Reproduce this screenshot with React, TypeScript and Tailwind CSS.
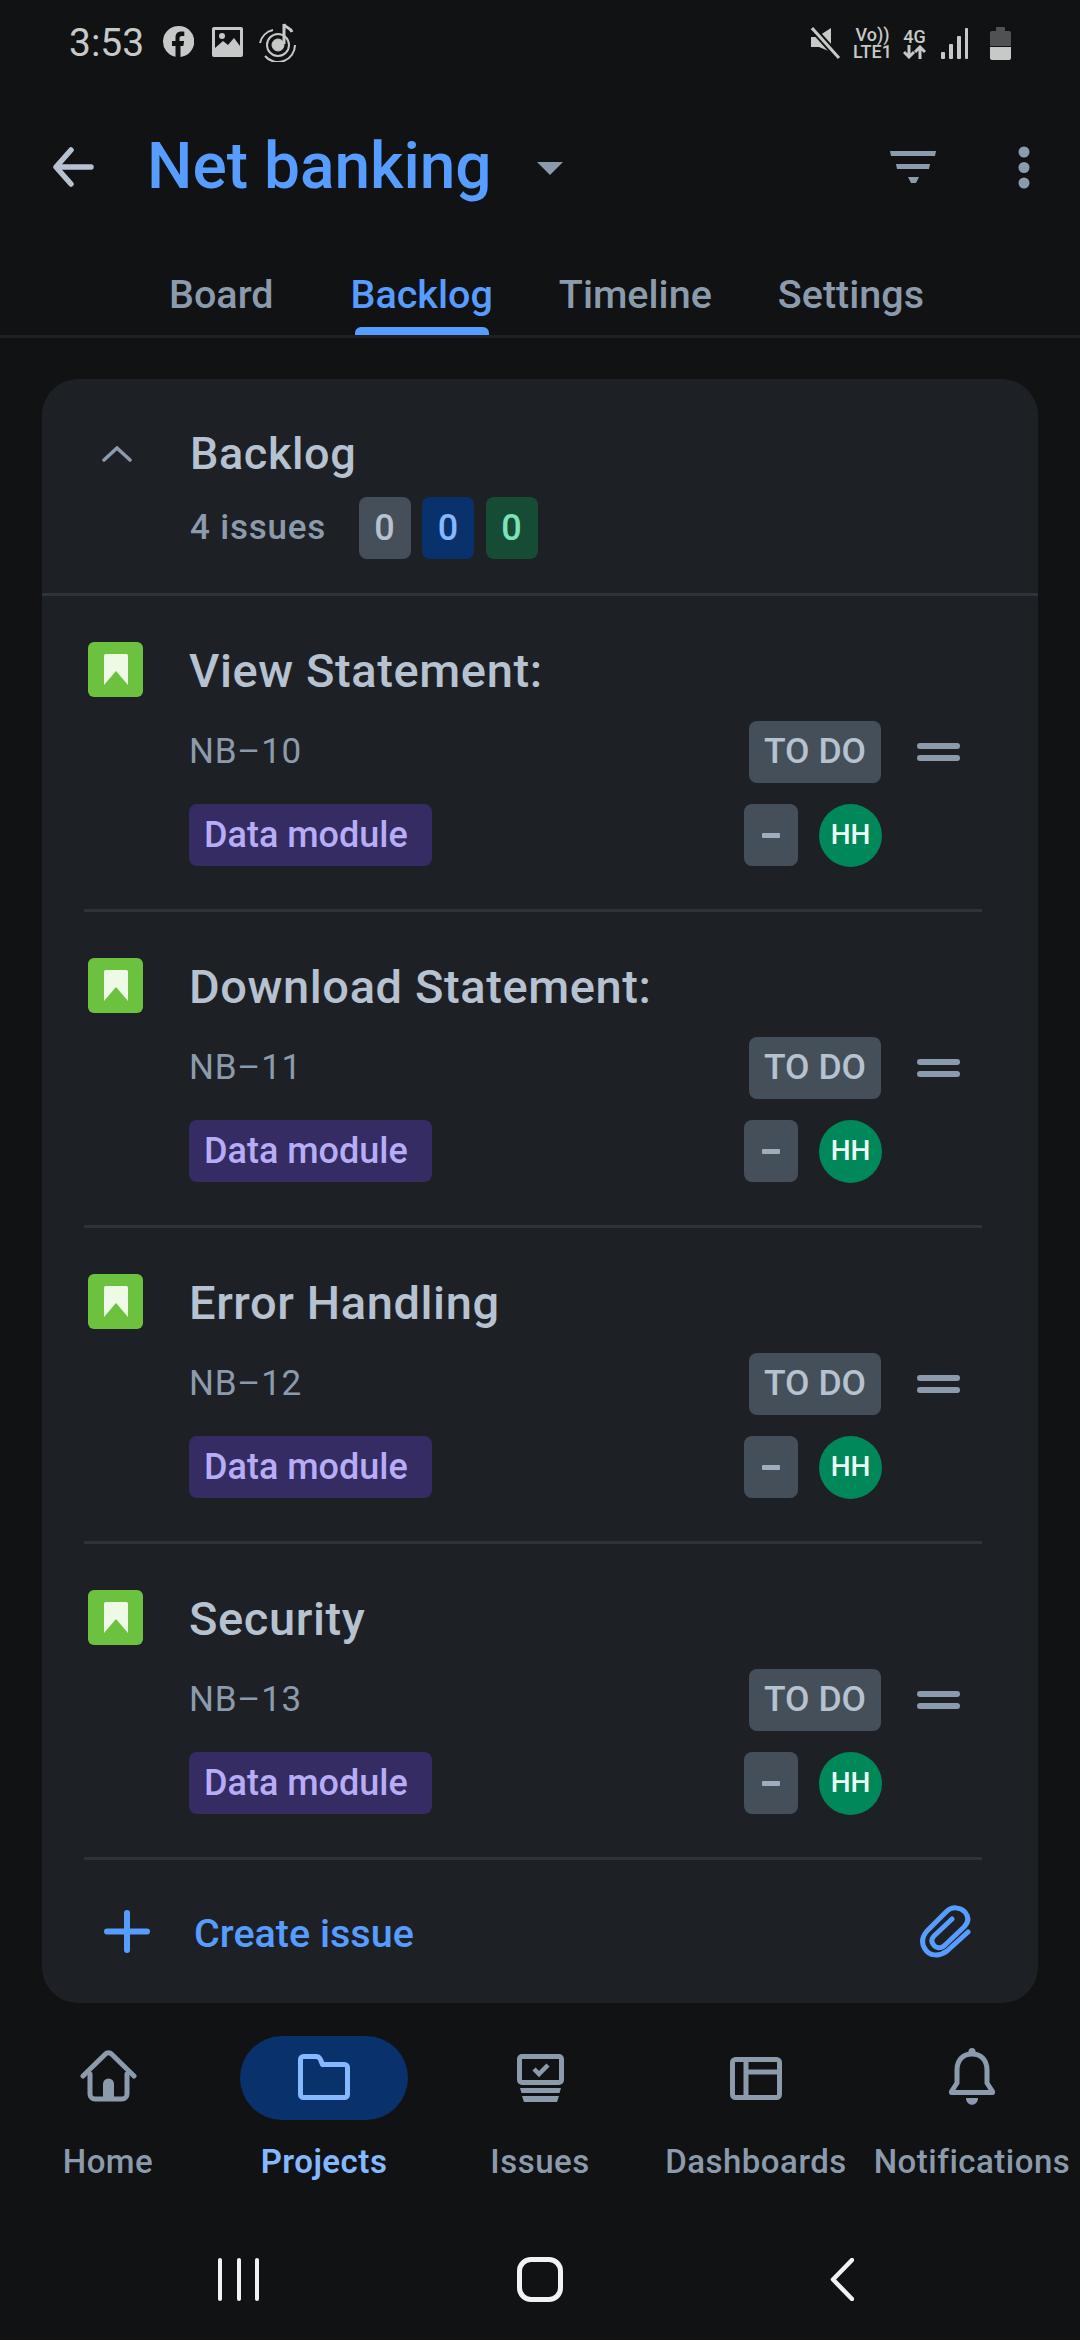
import React from "react";

const font = { fontFamily: "Roboto, sans-serif" };

function Bookmark() {
  return (
    <div className="w-[55px] h-[55px] rounded-[6px] bg-[#6cc13f] flex items-center justify-center shrink-0">
      <svg width="24" height="32" viewBox="0 0 24 32">
        <path d="M0 1.500A1.500 1.500 0 0 1 1.500 0h21A1.500 1.500 0 0 1 24 1.500V31L12 17 0 31z" fill="#eefae6" />
      </svg>
    </div>
  );
}

function Row({ title, id }: { title: string; id: string }) {
  return (
    <div className="ml-[42px] mr-[56px] h-[316px] border-b-[3px] border-[#2c333a]">
      <div className="flex pl-[4px] pt-[46px]">
        <Bookmark />
        <div className="ml-[46px] mt-[2px] text-[47px] leading-[53px] font-medium text-[#b6c2cf] tracking-[0.6px]">{title}</div>
      </div>
      <div className="flex items-center h-[62px] mt-[24px] pl-[105px] pr-[22px]">
        <div className="text-[35px] text-[#8c9bab] tracking-[0.8px] flex-1">{id}</div>
        <div className="w-[132px] h-[62px] rounded-[8px] bg-[#454f59] text-[#b6c2cf] text-[35.500px] font-medium flex items-center justify-center">TO DO</div>
        <svg className="ml-[36px]" width="43" height="18" viewBox="0 0 43 18">
          <rect x="0" y="0" width="43" height="6" rx="3" fill="#8c9bab" />
          <rect x="0" y="12" width="43" height="6" rx="3" fill="#8c9bab" />
        </svg>
      </div>
      <div className="flex items-center h-[62px] mt-[21px] pl-[105px]">
        <div className="w-[243px] h-[62px] rounded-[8px] bg-[#352c63] text-[#b8acf6] text-[36px] font-medium flex items-center pl-[15px]">Data module</div>
        <div className="ml-[312px] w-[54px] h-[62px] rounded-[8px] bg-[#454f59] flex items-center justify-center">
          <div className="w-[18px] h-[5px] bg-[#9fadbc] rounded-[1px]" />
        </div>
        <div className="ml-[21px] w-[63px] h-[63px] rounded-full bg-[#00875a] text-[#eafff5] text-[28px] font-medium flex items-center justify-center">HH</div>
      </div>
    </div>
  );
}

function StatusBar() {
  return (
    <div className="h-[86px] flex items-center pl-[69px] pr-[69px] text-[#c7c9c9]">
      <span className="text-[39px] leading-none w-[76px]">3:53</span>
      <svg className="ml-[18px] -mt-[3px]" width="31" height="31" viewBox="0 0 31 31">
        <path d="M15.500 0a15.500 15.500 0 0 0-3 30.700V20H9v-5h3.500v-3.500c0-4 2.300-6 5.800-6 1.500 0 2.900.2 3 .3v4.200h-2.300c-1.800 0-2.500 1-2.500 2.400V15h4.600l-.7 5H17.500v10.900A15.500 15.500 0 0 0 15.500 0z" fill="currentColor" />
      </svg>
      <svg className="ml-[18px] -mt-[3px]" width="31" height="30" viewBox="0 0 31 30">
        <path fillRule="evenodd" d="M2 0h27a2 2 0 0 1 2 2v26a2 2 0 0 1-2 2H2a2 2 0 0 1-2-2V2a2 2 0 0 1 2-2zM3 3v18l8-7 5 4 6-7 6 8V3z" fill="currentColor" />
        <circle cx="10" cy="9" r="3" fill="currentColor" />
      </svg>
      <svg className="ml-[16px] -mt-[3px]" width="38" height="40" viewBox="0 0 38 40" fill="none" stroke="currentColor">
        <circle cx="19" cy="23" r="6" fill="currentColor" />
        <circle cx="19" cy="23" r="11" strokeWidth="2" />
        <path d="M1 21a17 17 0 0 1 13-13M36 23a17 17 0 0 1-30 11" strokeWidth="2" />
        <path d="M25 22V2c1 4 6 3 8 8" strokeWidth="3" />
      </svg>
      <div className="flex-1" />
      <svg width="30" height="32" viewBox="0 0 30 32">
        <path d="M0 10h6L20 1v24L8 20H0z" fill="currentColor" />
        <path d="M1 1l27 30" stroke="#101214" strokeWidth="7" />
        <path d="M1 1l27 30" stroke="currentColor" strokeWidth="3" />
      </svg>
      <div className="ml-[12px] w-[39px] flex flex-col items-center text-[18px] leading-[17px] font-medium whitespace-nowrap">
        <span>Vo))</span>
        <span>LTE1</span>
      </div>
      <div className="ml-[11px] w-[23px] flex flex-col items-center text-[18px] leading-[17px] font-medium">
        <span>4G</span>
        <svg width="23" height="14" viewBox="0 0 23 14" fill="none" stroke="currentColor" strokeWidth="3">
          <path d="M6 0v12M1 7l5 5 5-5M17 14V2M12 7l5-5 5 5" />
        </svg>
      </div>
      <svg className="ml-[15px]" width="28" height="31" viewBox="0 0 28 31" fill="currentColor">
        <rect x="0" y="24" width="4" height="7" rx="1" />
        <rect x="8" y="16" width="4" height="15" rx="1" />
        <rect x="16" y="8" width="4" height="23" rx="1" />
        <rect x="24" y="0" width="3" height="31" rx="1" />
      </svg>
      <svg className="ml-[21px]" width="21" height="33" viewBox="0 0 21 33">
        <rect x="6" y="0" width="9" height="5" rx="1" fill="#4f5152" />
        <path d="M2 4h17a2 2 0 0 1 2 2v13H0V6a2 2 0 0 1 2-2z" fill="#4f5152" />
        <path d="M0 20h21v11a2 2 0 0 1-2 2H2a2 2 0 0 1-2-2z" fill="currentColor" />
      </svg>
    </div>
  );
}

function Header() {
  return (
    <div className="h-[160px] flex items-center pl-[53px] pr-[50px] pt-[2px]">
      <svg width="41" height="40" viewBox="0 0 41 40" fill="none" stroke="#b6c2cf" strokeWidth="5.500" strokeLinecap="round" strokeLinejoin="round">
        <path d="M18 3L3 20l15 17M4 20h34" />
      </svg>
      <div className="ml-[53px] text-[64px] leading-none font-medium text-[#579dff]">Net banking</div>
      <svg className="ml-[45px] mt-[2px]" width="26" height="13" viewBox="0 0 26 13">
        <path d="M0 0h26L13 13z" fill="#8c9bab" />
      </svg>
      <div className="flex-1" />
      <svg width="46" height="32" viewBox="0 0 46 32" fill="#8c9bab">
        <path d="M0 0h46l-1 5H1z" />
        <path d="M6 13h34l-1 5H7z" />
        <path d="M18 26h11l-3 6h-5z" />
      </svg>
      <svg className="ml-[82px]" width="12" height="43" viewBox="0 0 12 43" fill="#8c9bab">
        <circle cx="6" cy="6" r="5.500" />
        <circle cx="6" cy="21.500" r="5.500" />
        <circle cx="6" cy="37" r="5.500" />
      </svg>
    </div>
  );
}

function Tabs() {
  const tabs = [
    ["Board", "ml-[169px]"],
    ["Backlog", "ml-[77px]"],
    ["Timeline", "ml-[66px]"],
    ["Settings", "ml-[66px]"],
  ];
  return (
    <div className="h-[92px] border-b-[3px] border-[#1d2125] flex items-start text-[39.500px] leading-[50px] font-medium">
      {tabs.map(([t, ml]) => (
        <div key={t} className={`${ml} relative pt-[24px] h-[89px] ${t === "Backlog" ? "text-[#579dff]" : "text-[#8c9bab]"}`}>
          {t}
          {t === "Backlog" && <div className="absolute left-[4px] right-[4px] bottom-0 h-[8px] rounded-t-[6px] bg-[#579dff]" />}
        </div>
      ))}
    </div>
  );
}

function CountBadge({ bg, color }: { bg: string; color: string }) {
  return <div className={`w-[52px] h-[62px] rounded-[8px] flex items-center justify-center text-[36px] font-medium ${bg} ${color}`}>0</div>;
}

function Card() {
  return (
    <div className="mx-[42px] mt-[41px] w-[996px] h-[1624px] rounded-[36px] bg-[#1d2125] overflow-hidden">
      <div className="h-[217px] border-b-[3px] border-[#2c333a] relative">
        <svg className="absolute left-[60px] top-[67px]" width="30" height="16" viewBox="0 0 30 16" fill="none" stroke="#8c9bab" strokeWidth="3.500" strokeLinecap="round">
          <path d="M2 14L15 2l13 12" />
        </svg>
        <div className="pl-[148px] pt-[47px] text-[45px] leading-[55px] font-medium text-[#b6c2cf] tracking-[0.6px]">Backlog</div>
        <div className="flex items-center pl-[148px] mt-[16px] gap-[11.500px]">
          <div className="text-[35px] text-[#8c9bab] tracking-[0.8px] w-[157px] font-medium">4 issues</div>
          <CountBadge bg="bg-[#454f59]" color="text-[#b6c2cf]" />
          <CountBadge bg="bg-[#09326c]" color="text-[#85b8ff]" />
          <CountBadge bg="bg-[#164b35]" color="text-[#7ee2b8]" />
        </div>
      </div>
      <Row title="View Statement:" id="NB–10" />
      <Row title="Download Statement:" id="NB–11" />
      <Row title="Error Handling" id="NB–12" />
      <Row title="Security" id="NB–13" />
      <div className="flex items-center h-[143px] pl-[62px] pr-[66px]">
        <svg width="46" height="43" viewBox="0 0 46 43" fill="none" stroke="#579dff" strokeWidth="6" strokeLinecap="round">
          <path d="M23 3v37M3 21.500h40" />
        </svg>
        <div className="ml-[44px] mt-[4px] text-[39.500px] font-medium text-[#579dff] flex-1">Create issue</div>
        <svg width="53" height="53" viewBox="0 0 53 53" fill="none" stroke="#579dff" strokeWidth="5" strokeLinecap="round" strokeLinejoin="round">
          <path d="M49 27L28 46C20 52 10 51 6 44C2 38 3 32 8 26L27 7C33 1 41 2 46 7C50 12 50 17 45 22L25 41C21 44 16 43 14 39C12 36 13 33 15 31L33 14" />
        </svg>
      </div>
    </div>
  );
}

function NavItem({ label, active, children }: { label: string; active?: boolean; children: React.ReactNode }) {
  return (
    <div className="w-[216px] flex flex-col items-center">
      <div className={`w-[168px] h-[84px] rounded-[42px] flex items-center justify-center ${active ? "bg-[#09326c]" : ""}`}>{children}</div>
      <div className={`mt-[22px] text-[33px] leading-[40px] whitespace-nowrap tracking-[0.5px] ${active ? "text-[#85b8ff] font-semibold" : "text-[#8c9bab] font-medium"}`}>{label}</div>
    </div>
  );
}

function BottomNav() {
  return (
    <div className="mt-[33px] flex">
      <NavItem label="Home">
        <svg className="-mt-[4px]" width="57" height="52" viewBox="0 0 57 52" fill="none" stroke="#8c9bab" strokeWidth="5" strokeLinecap="round" strokeLinejoin="round">
          <path d="M3 26L25.500 4a4 4 0 0 1 6 0L54 26" />
          <path d="M10 24V44a5 5 0 0 0 5 5H42a5 5 0 0 0 5-5V24" />
          <path d="M23 50V34a5.500 5.500 0 0 1 11 0V50z" fill="#8c9bab" stroke="none" />
        </svg>
      </NavItem>
      <NavItem label="Projects" active>
        <svg className="-mt-[1px]" width="52" height="47" viewBox="0 0 52 47" fill="none" stroke="#85b8ff" strokeWidth="5" strokeLinejoin="round">
          <path d="M2.500 5.500a3 3 0 0 1 3-3H18c2 0 3.500 1 4.500 3l2 5h22a3 3 0 0 1 3 3v27a3 3 0 0 1-3 3h-41a3 3 0 0 1-3-3z" />
        </svg>
      </NavItem>
      <NavItem label="Issues">
        <svg width="47" height="48" viewBox="0 0 47 48" fill="none">
          <rect x="2.500" y="2.500" width="42" height="26" rx="2.500" stroke="#8c9bab" strokeWidth="5" />
          <path d="M17 15l5 5 9-9" stroke="#8c9bab" strokeWidth="4.500" />
          <path d="M3 34h41l-1.500 5h-38zM5 42h37l-2 6H7z" fill="#8c9bab" />
        </svg>
      </NavItem>
      <NavItem label="Dashboards">
        <svg width="52" height="43" viewBox="0 0 52 43" fill="none" stroke="#8c9bab" strokeWidth="5" strokeLinejoin="round">
          <rect x="2.500" y="2.500" width="47" height="38" rx="3" />
          <path d="M16 3v37M16 15h33" />
        </svg>
      </NavItem>
      <NavItem label="Notifications">
        <svg className="-mt-[3px]" width="46" height="57" viewBox="0 0 46 57" fill="none" stroke="#8c9bab" strokeWidth="5" strokeLinejoin="round">
          <path d="M8 35V22C8 12 14 6 23 6s15 6 15 16v13l5.500 8.500v1H2.500v-1z" />
          <circle cx="23" cy="3.500" r="3.500" fill="#8c9bab" stroke="none" />
          <path d="M17 50h12c0 9-12 9-12 0z" fill="#8c9bab" stroke="none" />
        </svg>
      </NavItem>
    </div>
  );
}

function SystemNav() {
  return (
    <div className="mt-[75px] relative h-[46px]">
      <div className="absolute left-[218px] top-[1px] flex gap-[14.500px]">
        <div className="w-[4px] h-[43px] rounded-full bg-[#f2f2f2]" />
        <div className="w-[4px] h-[43px] rounded-full bg-[#f2f2f2]" />
        <div className="w-[4px] h-[43px] rounded-full bg-[#f2f2f2]" />
      </div>
      <div className="absolute left-[517px] top-0 w-[46px] h-[45px] rounded-[14px] border-[5px] border-[#f2f2f2]" />
      <svg className="absolute left-[830px] top-[1px]" width="24" height="43" viewBox="0 0 24 43" fill="none" stroke="#f2f2f2" strokeWidth="4.500" strokeLinecap="round" strokeLinejoin="round">
        <path d="M22 2L3 21.500 22 41" />
      </svg>
    </div>
  );
}

export default function App() {
  return (
    <div className="w-[1080px] h-[2340px] bg-[#101214] overflow-hidden" style={font}>
      <StatusBar />
      <Header />
      <Tabs />
      <Card />
      <BottomNav />
      <SystemNav />
    </div>
  );
}
